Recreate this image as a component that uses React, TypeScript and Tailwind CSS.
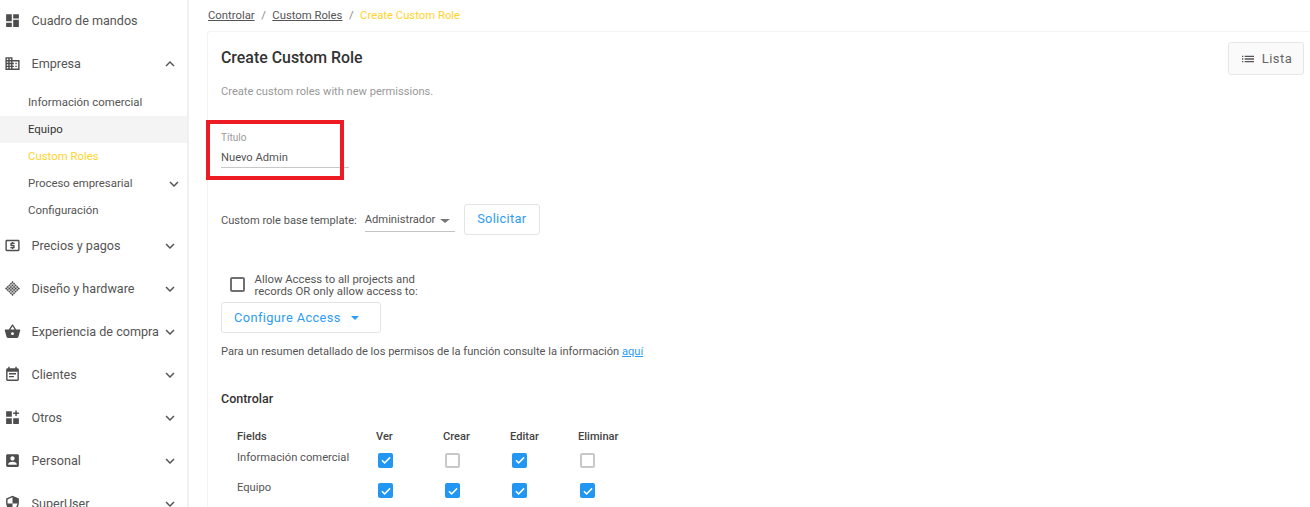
import React from "react";

const P: Record<string, string> = {
  dash: "M3 13h8V3H3v10zm0 8h8v-6H3v6zm10 0h8V11h-8v10zm0-18v6h8V3h-8z",
  biz: "M12 7V3H2v18h20V7H12zM6 19H4v-2h2v2zm0-4H4v-2h2v2zm0-4H4V9h2v2zm0-4H4V5h2v2zm4 12H8v-2h2v2zm0-4H8v-2h2v2zm0-4H8V9h2v2zm0-4H8V5h2v2zm10 12h-8v-2h2v-2h-2v-2h2v-2h-2V9h8v10zm-2-8h-2v2h2v-2zm0 4h-2v2h2v-2z",
  atm: "M11 17h2v-1h1c.55 0 1-.45 1-1v-3c0-.55-.45-1-1-1h-3v-1h4V8h-2V7h-2v1h-1c-.55 0-1 .45-1 1v3c0 .55.45 1 1 1h3v1H9v2h2v1zm9-13H4c-1.11 0-1.99.89-1.99 2L2 18c0 1.11.89 2 2 2h16c1.11 0 2-.89 2-2V6c0-1.11-.89-2-2-2zm0 14H4V6h16v12z",
  basket: "M17.21 9l-4.38-6.56c-.19-.28-.51-.42-.83-.42-.32 0-.64.14-.83.43L6.79 9H2c-.55 0-1 .45-1 1 0 .09.01.18.04.27l2.54 9.27c.23.84 1 1.46 1.92 1.46h13c.92 0 1.69-.62 1.93-1.46l2.54-9.27L23 10c0-.55-.45-1-1-1h-4.79zM9 9l3-4.4L15 9H9zm3 8c-1.1 0-2-.9-2-2s.9-2 2-2 2 .9 2 2-.9 2-2 2z",
  event: "M17 10H7v2h10v-2zm2-7h-1V1h-2v2H8V1H6v2H5c-1.11 0-1.99.9-1.99 2L3 19c0 1.1.89 2 2 2h14c1.1 0 2-.9 2-2V5c0-1.1-.9-2-2-2zm0 16H5V8h14v11zm-5-5H7v2h7v-2z",
  widgets: "M3 3h8v8H3zM3 13h8v8H3zM13 13h8v8h-8zM16 2h2v3h3v2h-3v3h-2V7h-3V5h3z",
  account: "M3 5v14c0 1.1.89 2 2 2h14c1.1 0 2-.9 2-2V5c0-1.1-.9-2-2-2H5c-1.11 0-2 .9-2 2zm12 4c0 1.66-1.34 3-3 3s-3-1.34-3-3 1.34-3 3-3 3 1.34 3 3zm-9 8c0-2 4-3.1 6-3.1s6 1.1 6 3.1v1H6v-1z",
  shield: "M12 1L3 5v6c0 5.55 3.84 10.74 9 12 5.16-1.26 9-6.45 9-12V5l-9-4zm0 10.99h7c-.53 4.12-3.28 7.79-7 8.94V12H5V6.3l7-3.11v8.8z",
  list: "M3 13h2v-2H3v2zm0 4h2v-2H3v2zm0-8h2V7H3v2zm4 4h14v-2H7v2zm0 4h14v-2H7v2zM7 7v2h14V7H7z",
};

function Icon({ name }: { name: string }) {
  if (name === "diamond") {
    const cells: React.ReactNode[] = [];
    for (let i = 0; i < 5; i++)
      for (let j = 0; j < 5; j++)
        cells.push(<rect key={`${i}-${j}`} x={4.6 + i * 3.1} y={4.6 + j * 3.1} width="2.4" height="2.4" />);
    return (
      <svg viewBox="0 0 24 24" className="w-[17px] h-[17px] fill-[#4d4d4d] shrink-0">
        <g transform="rotate(45 12 12)">{cells}</g>
      </svg>
    );
  }
  return (
    <svg viewBox="0 0 24 24" className="w-[17px] h-[17px] fill-[#4d4d4d] shrink-0">
      <path fillRule="evenodd" d={P[name]} />
    </svg>
  );
}

function Chevron({ up }: { up?: boolean }) {
  return (
    <svg viewBox="0 0 24 24" className="w-[18px] h-[18px] fill-[#555] shrink-0">
      <path d={up ? "M7.41 15.41L12 10.83l4.59 4.58L18 14l-6-6-6 6z" : "M7.41 8.59L12 13.17l4.59-4.58L18 10l-6 6-6-6z"} />
    </svg>
  );
}

function TopRow({ icon, label, up, chevron = true }: { icon: string; label: string; up?: boolean; chevron?: boolean }) {
  return (
    <div className="h-[43px] flex items-center pl-[4px] pr-[8px] shrink-0">
      <Icon name={icon} />
      <span className="ml-[10.5px] pt-[2px] text-[12.6px] text-[#555] whitespace-nowrap">{label}</span>
      {chevron && (
        <span className="ml-auto">
          <Chevron up={up} />
        </span>
      )}
    </div>
  );
}

function SubRow({ label, active, yellow, chevron }: { label: string; active?: boolean; yellow?: boolean; chevron?: boolean }) {
  const colour = yellow ? "text-[#ffd42a]" : active ? "text-[#333]" : "text-[#555]";
  return (
    <div className={`h-[27px] flex items-center pl-[28px] pr-[4px] text-[11.4px] ${colour} ${active ? "bg-[#f4f4f4]" : ""}`}>
      <span className="whitespace-nowrap">{label}</span>
      {chevron && (
        <span className="ml-auto">
          <Chevron />
        </span>
      )}
    </div>
  );
}

function Check({ on }: { on?: boolean }) {
  if (on)
    return (
      <span className="ml-[2px] w-[15px] h-[15px] rounded-[2px] bg-[#2196f3] flex items-center justify-center">
        <svg viewBox="0 0 24 24" className="w-[14px] h-[14px] fill-none stroke-white stroke-[2.6]">
          <path d="M5 12.5l4.6 4.5L19 7.5" />
        </svg>
      </span>
    );
  return <span className="ml-[2px] w-[15px] h-[15px] rounded-[2px] bg-white border-2 border-[#c8c8c8]" />;
}

const rows: { label: string; checks: boolean[] }[] = [
  { label: "Información comercial", checks: [true, false, true, false] },
  { label: "Equipo", checks: [true, true, true, true] },
];

const gridCols = "grid grid-cols-[139px_67px_67px_68px_60px]";

export default function App() {
  return (
    <div className="w-[1310px] h-[507px] overflow-hidden bg-white flex font-['Roboto',sans-serif]">
      <aside className="w-[189px] h-[507px] shrink-0 border-r-2 border-[#f0f0f0] flex flex-col overflow-hidden">
        <div className="-mt-px">
          <TopRow icon="dash" label="Cuadro de mandos" chevron={false} />
        </div>
        <TopRow icon="biz" label="Empresa" up />
        <div className="h-[4px] shrink-0" />
        <div className="shrink-0">
          <SubRow label="Información comercial" />
          <SubRow label="Equipo" active />
          <SubRow label="Custom Roles" yellow />
          <SubRow label="Proceso empresarial" chevron />
          <SubRow label="Configuración" />
        </div>
        <TopRow icon="atm" label="Precios y pagos" />
        <TopRow icon="diamond" label="Diseño y hardware" />
        <TopRow icon="basket" label="Experiencia de compra" />
        <TopRow icon="event" label="Clientes" />
        <TopRow icon="widgets" label="Otros" />
        <TopRow icon="account" label="Personal" />
        <TopRow icon="shield" label="SuperUser" />
      </aside>

      <main className="flex-1 min-w-0 pl-[18px]">
        <nav className="h-[31px] pt-[8px] pl-px flex items-start text-[11.3px] leading-[15px] text-[#555]">
          <span className="underline">Controlar</span>
          <span className="mx-[6.5px] text-[#888]">/</span>
          <span className="underline">Custom Roles</span>
          <span className="mx-[6.5px] text-[#888]">/</span>
          <span className="text-[#ffd42a]">Create Custom Role</span>
        </nav>

        <section className="relative h-[476px] border-l border-t border-[#f3f3f3] rounded-tl-[3px] pl-[13px] pr-[6px]">
          <header className="flex items-start justify-between pt-[10px]">
            <h1 className="pt-[6px] text-[15.9px] leading-[20px] font-medium text-[#333]">Create Custom Role</h1>
            <button className="w-[76px] h-[33px] rounded-[3px] border border-[#e6e6e6] bg-[#fafafa] flex items-center justify-center gap-[6px] text-[13px] tracking-[0.5px] text-[#666]">
              <svg viewBox="0 0 24 24" className="w-[16px] h-[16px] fill-[#555]">
                <path d={P.list} />
              </svg>
              Lista
            </button>
          </header>

          <p className="mt-[9px] text-[11.1px] leading-[16px] text-[#999]">Create custom roles with new permissions.</p>

          <div className="mt-[32px] w-[128px] h-[36px] border-b border-[#c8c8c8]">
            <div className="text-[10px] leading-[12px] text-[#999]">Título</div>
            <div className="mt-[7px] text-[11.2px] leading-[14px] text-[#555]">Nuevo Admin</div>
          </div>

          <div className="mt-[35px] flex items-center h-[32px]">
            <span className="pt-[4px] text-[11.1px] text-[#555] whitespace-nowrap">Custom role base template:</span>
            <div className="ml-[8px] w-[90px] h-[25px] pt-[4px] border-b border-[#c4c4c4] flex items-center text-[11.2px] text-[#555]">
              Administrador
              <span className="ml-[5px] w-0 h-0 border-x-[5px] border-x-transparent border-t-[4px] border-t-[#777]" />
            </div>
            <button className="ml-[9px] w-[76px] h-[31px] rounded-[3px] border border-[#e4e4e4] bg-white text-[12.8px] text-[#2d9cf4] tracking-[0.3px]">Solicitar</button>
          </div>

          <div className="mt-[37px] flex items-center pl-[9px]">
            <span className="w-[15px] h-[15px] rounded-[2px] border-2 border-[#707070]" />
            <span className="ml-[9.5px] pt-[2px] text-[11.35px] leading-[11.5px] text-[#555]">
              Allow Access to all projects and
              <br />
              records OR only allow access to:
            </span>
          </div>

          <button className="mt-[5px] w-[160px] h-[31px] rounded-[3px] border border-[#e4e4e4] bg-white flex items-center pl-[12px] text-[12.8px] text-[#2d9cf4] tracking-[0.4px]">
            Configure Access
            <span className="ml-[10px] w-0 h-0 border-x-[4px] border-x-transparent border-t-[4px] border-t-[#2d9cf4]" />
          </button>

          <p className="mt-[11px] text-[11.1px] leading-[16px] text-[#555]">
            Para un resumen detallado de los permisos de la función consulte la información{" "}
            <span className="text-[#2d9cf4] underline">aquí</span>
          </p>

          <h2 className="mt-[31px] text-[12.5px] leading-[16px] font-medium text-[#333]">Controlar</h2>

          <div className="mt-[22px] w-[420px] pl-[16px]">
            <div className={`${gridCols} h-[16px] items-center text-[11.1px] font-medium text-[#444]`}>
              <span>Fields</span>
              <span>Ver</span>
              <span>Crear</span>
              <span>Editar</span>
              <span>Eliminar</span>
            </div>
            {rows.map((r, idx) => (
              <div key={r.label} className={`${gridCols} ${idx === 0 ? "h-[30px]" : "h-[31px]"} items-center`}>
                <span className="text-[11.2px] text-[#555] whitespace-nowrap -mt-[4px]">{r.label}</span>
                {r.checks.map((c, i) => (
                  <Check key={i} on={c} />
                ))}
              </div>
            ))}
          </div>

          <div className="absolute -left-[2px] top-[88px] w-[138px] h-[60px] border-[4px] border-[#ed1c24] pointer-events-none" />
        </section>
      </main>
    </div>
  );
}
